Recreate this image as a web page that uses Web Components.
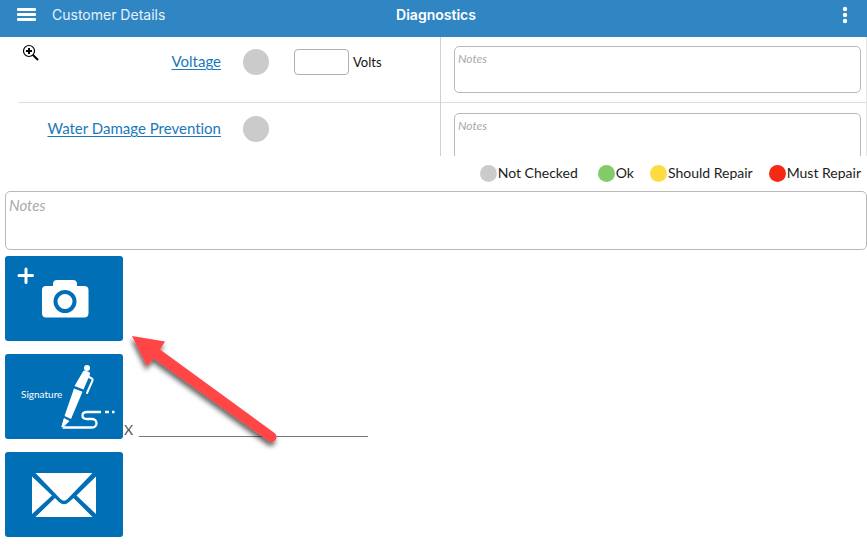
<!DOCTYPE html>
<html lang="en">
<head>
<meta charset="utf-8">
<meta name="viewport" content="width=device-width, initial-scale=1">
<title>Diagnostics</title>
<style>
  body {
    margin: 0;
    background: #fff;
    color: #222;
    font-family: Lato, "Open Sans", sans-serif;
    font-variant-ligatures: none;
  }
</style>
</head>
<body>
<diagnostics-page></diagnostics-page>

<script>
(function() {

  /* Shared helper */
  function attach(elem, html) {
    const template = document.createElement("template");
    template.innerHTML = html;
    elem.attachShadow({ mode: "open" }).appendChild(template.content.cloneNode(true));
  }

  /* Title bar */
  class AppHeader extends HTMLElement {
    constructor() {
      super();
      attach(this, `
        <style>
          :host { display: block; position: relative; background: #3086c3; box-shadow: 0 1px 0 #3086c3; color: #fff; }
          header {
            display: grid;
            grid-template-columns: 1fr auto 1fr;
            align-items: center;
            height: 36px;
            padding: 0 12px 6px 17px;
            box-sizing: border-box;
            font-family: Inter, Roboto, sans-serif;
            font-size: 14px;
            line-height: 20px;
          }
          .left { display: flex; align-items: center; gap: 16px; }
          button { display: flex; padding: 0; border: 0; background: none; }
          a { color: #e6f2fa; text-decoration: none; }
          h1 { margin: 0; font-size: 14px; font-weight: 600; }
          .more { justify-self: end; }
        </style>
        <header>
          <div class="left">
            <button type="button" aria-label="Menu">
              <svg width="19" height="14" viewBox="0 0 19 14" fill="#fff">
                <rect width="19" height="3" rx="1"/>
                <rect y="5" width="19" height="3" rx="1"/>
                <rect y="10" width="19" height="3" rx="1"/>
              </svg>
            </button>
            <a href="#customer"><slot name="back"></slot></a>
          </div>
          <h1><slot></slot></h1>
          <button class="more" type="button" aria-label="More">
            <svg width="20" height="18" viewBox="0 0 20 18" fill="#fff">
              <circle cx="10" cy="3" r="2.2"/><circle cx="10" cy="9" r="2.2"/><circle cx="10" cy="15" r="2.2"/>
            </svg>
          </button>
        </header>
      `);
    }
  }

  /* Round status marker */
  class StatusDot extends HTMLElement {
    constructor() {
      super();
      attach(this, `
        <style>
          :host {
            display: block;
            flex: none;
            width: var(--dot-size, 26px);
            height: var(--dot-size, 26px);
            border-radius: 50%;
            background: #cbcbcb;
          }
          :host([status="ok"]) { background: #82cb68; }
          :host([status="should"]) { background: #ffdb43; }
          :host([status="must"]) { background: #f52a14; }
        </style>
      `);
    }
  }

  /* Notes box */
  class NotesField extends HTMLElement {
    constructor() {
      super();
      attach(this, `
        <style>
          :host { display: block; }
          textarea {
            display: block;
            width: 100%;
            height: var(--notes-height, 47px);
            box-sizing: border-box;
            padding: 4px 3px;
            border: 1px solid #b9b9b9;
            border-radius: 5px;
            background: #fff;
            resize: none;
            outline: none;
            overflow: hidden;
            font-family: inherit;
            font-size: var(--notes-font, 12px);
            line-height: var(--notes-line, 16px);
          }
          textarea::placeholder { color: #a9a9a9; font-style: italic; opacity: 1; }
        </style>
        <textarea placeholder="Notes" aria-label="Notes"></textarea>
      `);
    }
  }

  /* One line of the check list; the slot takes the reading, if there is one */
  class CheckRow extends HTMLElement {
    constructor() {
      super();
      attach(this, `
        <style>
          :host { display: block; }
          .row { display: grid; grid-template-columns: 423fr 426fr; height: 67px; padding-left: 18px; }
          .check, .notes { box-sizing: border-box; border-bottom: 1px solid #dedede; min-width: 0; }
          .check {
            display: grid;
            grid-template-columns: 203fr 26px 149fr;
            column-gap: 22px;
            align-items: start;
            padding-top: 13px;
            border-right: 1px solid #cfcfcf;
          }
          a { justify-self: end; color: #1b78ba; font-size: 15px; line-height: 24px; text-underline-offset: 2px; text-decoration-thickness: 1px; }
          .notes { padding: 10px 5px 0 13px; border-right: 1px solid #e4e4e4; }
        </style>
        <div class="row">
          <div class="check">
            <a href="#check"><slot name="label"></slot></a>
            <status-dot></status-dot>
            <div><slot></slot></div>
          </div>
          <div class="notes"><notes-field></notes-field></div>
        </div>
      `);
    }
  }

  class UnitInput extends HTMLElement {
    constructor() {
      super();
      attach(this, `
        <style>
          :host { display: block; padding-left: 3px; }
          label { display: flex; align-items: center; gap: 4px; color: #111; font-size: 13px; line-height: 26px; }
          input {
            order: -1;
            width: 55px;
            height: 26px;
            box-sizing: border-box;
            border: 1px solid #b0b0b0;
            border-radius: 4px;
            background: #fff;
            font: inherit;
          }
        </style>
        <label><slot></slot><input type="text"></label>
      `);
    }
  }

  /* Colour key */
  class StatusLegend extends HTMLElement {
    constructor() {
      super();
      attach(this, `
        <style>
          :host { display: block; --dot-size: 17px; }
          ul {
            display: flex;
            justify-content: flex-end;
            gap: 16px;
            margin: 0;
            padding: 8px 6px 9px 0;
            list-style: none;
            font-size: 14px;
            line-height: 18px;
          }
          li { display: flex; align-items: center; gap: 1px; color: #1c1c1c; }
          li:first-child { margin-right: 4px; }
        </style>
        <ul>
          <li><status-dot></status-dot>Not Checked</li>
          <li><status-dot status="ok"></status-dot>Ok</li>
          <li><status-dot status="should"></status-dot>Should Repair</li>
          <li><status-dot status="must"></status-dot>Must Repair</li>
        </ul>
      `);
    }
  }

  /* Blue button */
  class ActionTile extends HTMLElement {
    constructor() {
      super();
      attach(this, `
        <style>
          :host { display: block; }
          button {
            display: grid;
            place-items: center;
            width: 118px;
            height: 85px;
            padding: 0;
            border: 0;
            border-radius: 3px;
            background: #006fb6;
            color: #fff;
            font-family: inherit;
            font-size: 10px;
            line-height: 12px;
          }
        </style>
        <button type="button"><slot></slot></button>
      `);
      this._button = this.shadowRoot.querySelector("button");
    }

    connectedCallback() {
      if (this.hasAttribute("name")) {
        this._button.setAttribute("aria-label", this.getAttribute("name"));
      }
    }
  }

  /* The page */
  class DiagnosticsPage extends HTMLElement {
    constructor() {
      super();
      attach(this, `
        <style>
          :host { display: block; position: relative; }
          .checks { height: 120px; overflow: hidden; }
          .general { --notes-height: 59px; --notes-font: 15px; --notes-line: 18px; padding-left: 5px; }
          .actions { display: grid; gap: 13px; position: relative; padding: 6px 0 12px 5px; }
          .sign { display: flex; align-items: flex-end; gap: 1px; color: #555; font-size: 14px; line-height: 18px; }
          .line { width: 229px; margin: 0 0 2px 5px; border-bottom: 1px solid #777; }
          svg { display: block; }
          .signature { display: flex; align-items: center; width: 118px; height: 85px; padding-left: 16px; box-sizing: border-box; }
          .signature span { width: 38px; padding-bottom: 5px; }
          .arrow { position: absolute; left: 123px; top: 75px; overflow: visible; pointer-events: none; }
          .cursor { position: absolute; left: 22px; top: 44px; pointer-events: none; }
        </style>
        <app-header><span slot="back">Customer Details</span>Diagnostics</app-header>
        <main>
          <div class="checks">
            <check-row><span slot="label">Voltage</span><unit-input>Volts</unit-input></check-row>
            <check-row><span slot="label">Water Damage Prevention</span></check-row>
          </div>
          <status-legend></status-legend>
          <notes-field class="general"></notes-field>
          <div class="actions">
            <action-tile name="Add photo">
              <svg width="118" height="85" viewBox="0 1 118 85">
                <path d="M14 20.5h13.500M21 14v13.500" stroke="#fff" stroke-width="3" stroke-linecap="round"/>
                <path fill="#fff" d="M41 31h7v-2q0-4 4-4h16q4 0 4 4v2h7q4.500 0 4.500 4v23q0 4.500-4.500 4.500H41q-4 0-4-4.500V35q0-4 4-4z"/>
                <circle cx="60" cy="46.500" r="9.500" fill="#fff" stroke="#006fb6" stroke-width="4"/>
              </svg>
            </action-tile>
            <div class="sign">
              <action-tile>
                <div class="signature">
                  <span>Signature</span>
                  <svg width="60" height="85" viewBox="54 0 60 85" fill="#fff">
                    <circle cx="82" cy="14" r="3"/>
                    <path d="M78 17.500q1-1.500 3-.8l2.500 1q2 .8 1.500 2.800L78.500 35.500l-9-3.500z"/>
                    <path d="M69 34.500l8.500 3.300L66 65l-6.500-3z"/>
                    <path d="M59 64l5.500 3-6 6h-2z"/>
                    <path d="M84 23l3 1.500q1 .7.500 2l-5.500 12.500" fill="none" stroke="#fff" stroke-width="2" stroke-linecap="round"/>
                    <path d="M57.500 73.500H87c6 0 6-8.500 0-8.500h-5c-6 0-6-7 0-7h14M100 58h4M107 58h2.500M57.500 73l2.500-8" fill="none" stroke="#fff" stroke-width="2.300"/>
                  </svg>
                </div>
              </action-tile>
              X <div class="line"></div>
            </div>
            <action-tile name="Send email">
              <svg width="118" height="85" viewBox="0 0 118 85" fill="#fff">
                <path d="M30.500 21h57L62.500 47q-3.500 3.500-7 0z"/>
                <path d="M27 24.500L47 43.500 27 62zM91 24.500L71.500 43.500 91 62z"/>
                <path d="M50 46l4 4q5 4.500 10 0l4.500-4L87.500 65h-57z"/>
              </svg>
            </action-tile>
            <svg class="arrow" width="160" height="125" viewBox="123 325 160 125">
              <defs>
                <filter id="shade" x="-20%" y="-20%" width="140%" height="150%">
                  <feDropShadow dx="-1" dy="4" stdDeviation="2.500" flood-color="#000" flood-opacity=".6"/>
                </filter>
              </defs>
              <path filter="url(#shade)" fill="#ff4444" d="M132 336l33 5.500-5 8L274.500 433a5 5 0 0 1-6 8L153.500 358.500 147 366z"/>
            </svg>
          </div>
        </main>
        <svg class="cursor" width="17" height="17" viewBox="0 0 17 17" fill="none" stroke="#000">
          <path d="M10.500 10.500l5.500 5.500" stroke-width="2"/>
          <circle cx="7" cy="7" r="5.500" stroke-width="1.200" fill="#fff"/>
          <path d="M4 7h6M7 4v6" stroke-width="2"/>
        </svg>
      `);
    }
  }

  /* Registration */
  customElements.define("app-header", AppHeader);
  customElements.define("status-dot", StatusDot);
  customElements.define("notes-field", NotesField);
  customElements.define("check-row", CheckRow);
  customElements.define("unit-input", UnitInput);
  customElements.define("status-legend", StatusLegend);
  customElements.define("action-tile", ActionTile);
  customElements.define("diagnostics-page", DiagnosticsPage);
})();
</script>
</body>
</html>
